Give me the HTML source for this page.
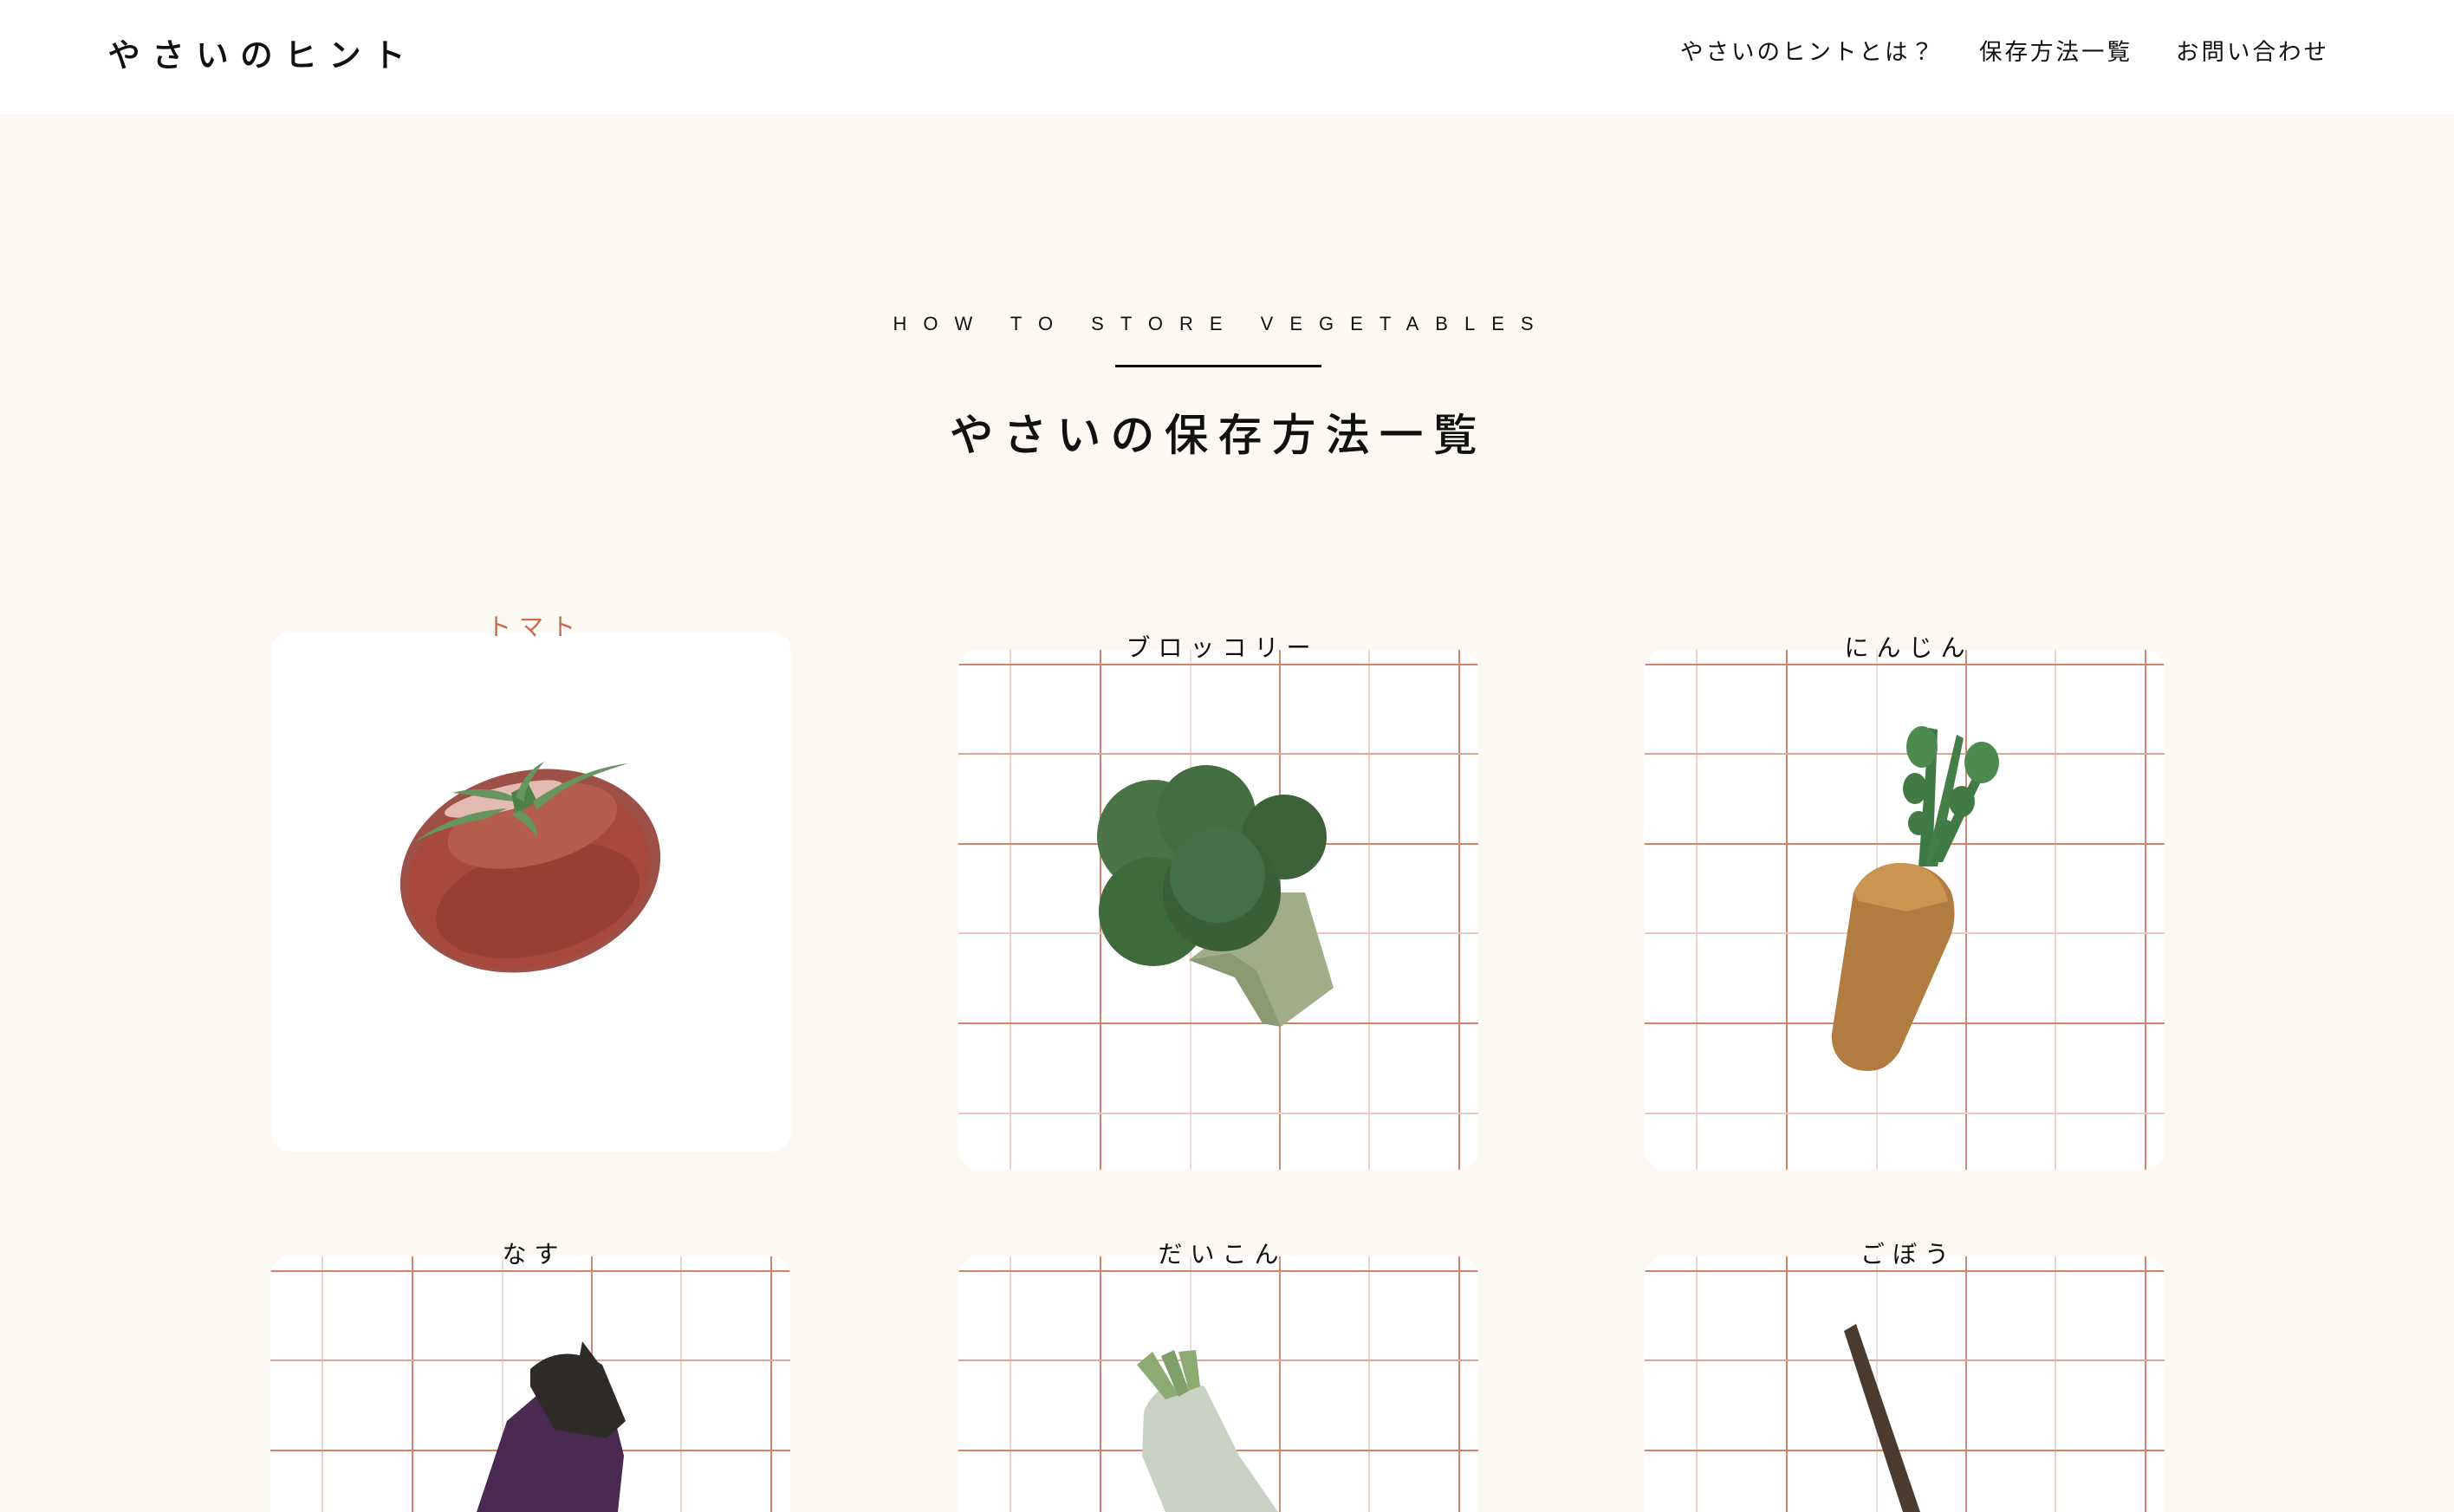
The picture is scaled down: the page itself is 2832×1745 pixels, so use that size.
<!DOCTYPE html>
<html><head><meta charset="utf-8">
<style>
*{margin:0;padding:0;box-sizing:border-box}
html,body{width:2832px;height:1745px;overflow:hidden;background:#fcf9f2;font-family:"Liberation Sans","Noto Sans CJK JP",sans-serif;color:#111}
#wrap{position:relative;width:2832px;height:1745px;overflow:hidden}
header{position:absolute;left:0;top:0;width:2832px;height:132px;background:#fff}
.logo{position:absolute;left:124px;top:40px;font-size:38px;letter-spacing:13px;font-weight:500;line-height:50px}
nav{position:absolute;top:42px;right:144px;font-size:26.5px;line-height:36px}
nav span{margin-left:50px;letter-spacing:3px}
.en{position:absolute;left:0;width:2800px;top:359px;text-align:center;font-size:22px;letter-spacing:19px;padding-left:19px;line-height:30px}
.bar{position:absolute;left:1287px;top:421px;width:238px;height:3px;background:#111}
.title{position:absolute;left:0;width:2800px;top:471px;text-align:center;font-size:51px;letter-spacing:11px;padding-left:11px;line-height:64px;font-weight:500}
.card{position:absolute;width:600px;height:600px;border-radius:22px;background:#fff;overflow:visible}
.card.b{height:295px;border-radius:22px 22px 0 0}
.card .g{position:absolute;left:0;top:0;border-radius:22px;overflow:hidden}
.card.b .g{border-radius:22px 22px 0 0}
.lbl{position:absolute;left:0;width:600px;top:-19px;text-align:center;font-size:28px;letter-spacing:9px;padding-left:9px;line-height:34px}
.vg{position:absolute;left:0;top:0}
</style></head><body><div id="wrap">
<header>
<div class="logo">やさいのヒント</div>
<nav><span>やさいのヒントとは？</span><span>保存方法一覧</span><span>お問い合わせ</span></nav>
</header>
<div class="en">HOW TO STORE VEGETABLES</div>
<div class="bar"></div>
<div class="title">やさいの保存方法一覧</div>

<svg width="0" height="0" style="position:absolute">
<defs>
<pattern id="grid" x="0" y="0" width="600" height="600" patternUnits="userSpaceOnUse">
<g stroke-width="2">
<line x1="60" y1="0" x2="60" y2="600" stroke="#f0d2ca"/>
<line x1="164" y1="0" x2="164" y2="600" stroke="#d4826b"/>
<line x1="268" y1="0" x2="268" y2="600" stroke="#eeddd6"/>
<line x1="371" y1="0" x2="371" y2="600" stroke="#cf8a78"/>
<line x1="474" y1="0" x2="474" y2="600" stroke="#f0d2ca"/>
<line x1="578" y1="0" x2="578" y2="600" stroke="#d4826b"/>
<line x1="0" y1="17" x2="600" y2="17" stroke="#d4826b"/>
<line x1="0" y1="120" x2="600" y2="120" stroke="#e0a595"/>
<line x1="0" y1="224" x2="600" y2="224" stroke="#d4826b"/>
<line x1="0" y1="327" x2="600" y2="327" stroke="#f0c9bf"/>
<line x1="0" y1="431" x2="600" y2="431" stroke="#d4826b"/>
<line x1="0" y1="535" x2="600" y2="535" stroke="#f0c9bf"/>
</g></pattern></defs></svg>

<div class="card" style="left:313px;top:729px"><div class="lbl" style="color:#c9694f;top:-22px">トマト</div></div>
<div class="card" style="left:1106px;top:750px"><svg class="g" width="600" height="600"><rect width="600" height="600" fill="url(#grid)"/></svg><div class="lbl">ブロッコリー</div></div>
<div class="card" style="left:1898px;top:750px"><svg class="g" width="600" height="600"><rect width="600" height="600" fill="url(#grid)"/></svg><div class="lbl">にんじん</div></div>
<div class="card b" style="left:312px;top:1450px"><svg class="g" width="600" height="295"><rect width="600" height="295" fill="url(#grid)"/></svg><div class="lbl">なす</div></div>
<div class="card b" style="left:1106px;top:1450px"><svg class="g" width="600" height="295"><rect width="600" height="295" fill="url(#grid)"/></svg><div class="lbl">だいこん</div></div>
<div class="card b" style="left:1898px;top:1450px"><svg class="g" width="600" height="295"><rect width="600" height="295" fill="url(#grid)"/></svg><div class="lbl">ごぼう</div></div>

<svg class="vg" width="2832" height="1745">
<!-- tomato -->
<g transform="translate(612,1005) rotate(-14)">
<ellipse rx="152" ry="115" fill="#9c5048"/>
<ellipse cx="-3" cy="5" rx="142" ry="105" fill="#a84a3b"/>
<ellipse cx="0" cy="35" rx="120" ry="62" fill="#973f31"/>
<ellipse cx="15" cy="-50" rx="100" ry="45" fill="#b45d4a"/>
<ellipse cx="-10" cy="-88" rx="70" ry="14" fill="#e4bbb2"/>
</g>
<path d="M478,972 C520,940 560,935 585,933 L560,945 C530,950 500,960 478,972Z" fill="#67955f"/>
<path d="M522,915 C560,905 590,915 600,925 C580,925 550,918 522,915Z" fill="#67955f"/>
<path d="M595,940 L590,915 L610,905 L620,925Z" fill="#4e8048"/>
<path d="M595,920 C600,905 610,888 628,879 C615,895 605,910 605,925Z" fill="#67955f"/>
<path d="M615,925 C650,900 690,885 725,881 C690,892 650,905 620,935Z" fill="#67955f"/>
<path d="M600,935 C610,940 620,950 620,965 C610,955 600,945 590,940Z" fill="#67955f"/>
<!-- broccoli -->
<path d="M1372,1108 L1425,1128 L1457,1181 L1478,1185 L1539,1140 L1506,1030 L1474,1030Z" fill="#a1ac88"/>
<path d="M1372,1108 L1425,1128 L1457,1181 L1478,1185 L1450,1120 L1420,1100Z" fill="#8b9a73"/>
<circle cx="1331" cy="965" r="65" fill="#4b7348"/>
<circle cx="1392" cy="940" r="57" fill="#446d42"/>
<circle cx="1482" cy="966" r="49" fill="#3d6139"/>
<circle cx="1331" cy="1052" r="63" fill="#3f6a3c"/>
<circle cx="1410" cy="1030" r="68" fill="#3a5f37"/>
<circle cx="1405" cy="1010" r="55" fill="#457047"/>
<!-- carrot -->
<path d="M2214,1000 L2226,840 L2236,842 L2230,1000Z" fill="#3f7a45"/>
<path d="M2222,1000 L2258,848 L2266,852 L2236,1000Z" fill="#447f48"/>
<path d="M2228,995 L2294,862 L2302,868 L2242,995Z" fill="#3f7a45"/>
<ellipse cx="2218" cy="862" rx="18" ry="24" fill="#4c8a4f"/>
<ellipse cx="2210" cy="910" rx="14" ry="18" fill="#427a45"/>
<ellipse cx="2214" cy="950" rx="12" ry="14" fill="#427a45"/>
<ellipse cx="2287" cy="880" rx="20" ry="24" fill="#4c8a4f"/>
<ellipse cx="2264" cy="925" rx="15" ry="18" fill="#427a45"/>
<ellipse cx="2245" cy="960" rx="12" ry="14" fill="#427a45"/>
<path d="M2139,1030 C2150,1005 2175,996 2192,996 C2215,996 2240,1005 2252,1030 C2258,1050 2256,1070 2249,1085 L2192,1214 C2180,1232 2168,1236 2155,1236 C2130,1236 2112,1218 2114,1193Z" fill="#b07c40"/>
<path d="M2139,1030 C2150,1005 2175,996 2192,996 C2215,996 2240,1005 2248,1040 L2200,1052 L2145,1040Z" fill="#c99550"/>
<!-- eggplant -->
<path d="M620,1610 L700,1600 L720,1680 L713,1745 L550,1745 L585,1640Z" fill="#4a2a51"/>
<path d="M612,1580 C640,1555 670,1560 695,1575 L722,1640 L700,1660 L640,1650 L612,1600Z" fill="#2e2b27"/>
<path d="M672,1548 L690,1572 L688,1600 L675,1605 L668,1570Z" fill="#2e2b27"/>
<!-- daikon -->
<path d="M1320,1630 C1330,1600 1360,1590 1390,1600 L1430,1680 L1475,1745 L1345,1745 L1318,1680Z" fill="#c9d1c3"/>
<path d="M1312,1575 L1330,1560 L1360,1610 L1345,1615Z" fill="#8cab72"/>
<path d="M1340,1565 L1355,1558 L1372,1605 L1360,1612Z" fill="#7f9f68"/>
<path d="M1360,1560 L1380,1558 L1385,1600 L1372,1605Z" fill="#8cab72"/>
<!-- burdock -->
<path d="M2128,1536 L2142,1528 L2216,1745 L2196,1745Z" fill="#4a3b2e"/>
</svg>
</div></body></html>
